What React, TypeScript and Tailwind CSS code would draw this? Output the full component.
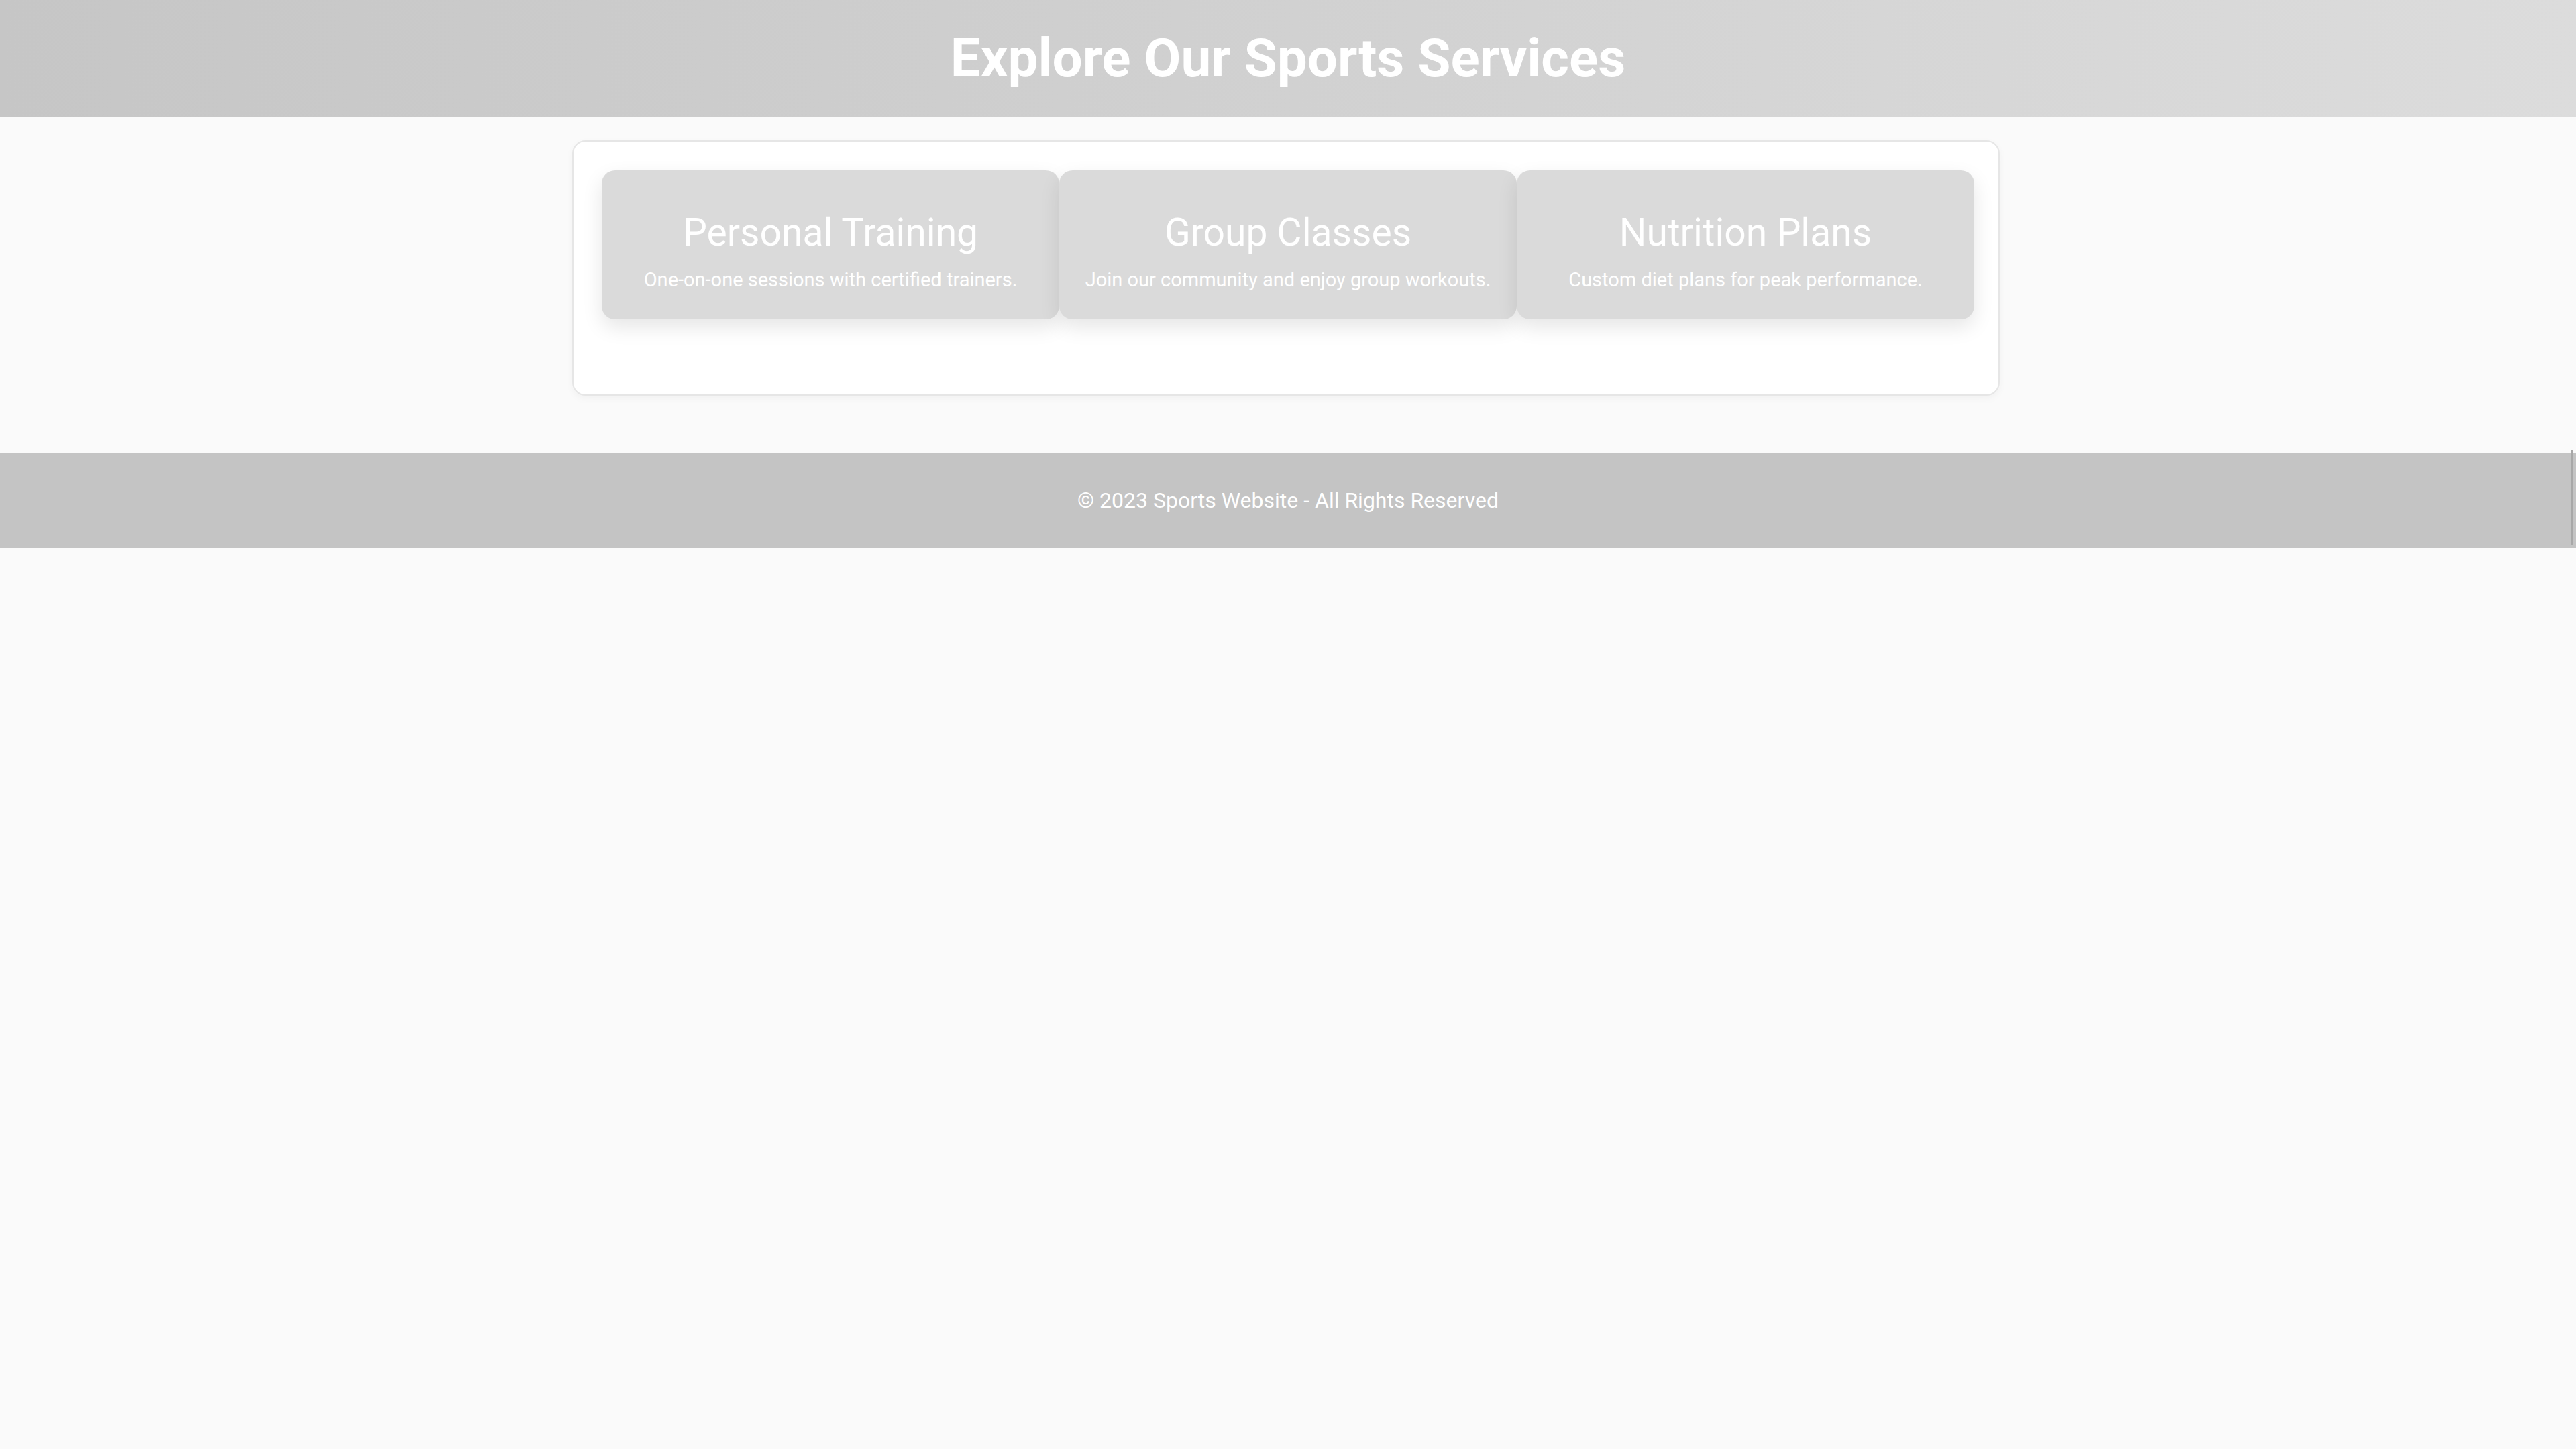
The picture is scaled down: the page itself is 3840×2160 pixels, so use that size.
import React from "react";

interface Service {
  title: string;
  text: string;
}

const services: Service[] = [
  { title: "Personal Training", text: "One-on-one sessions with certified trainers." },
  { title: "Group Classes", text: "Join our community and enjoy group workouts." },
  { title: "Nutrition Plans", text: "Custom diet plans for peak performance." },
];

const ServiceCard: React.FC<Service> = ({ title, text }) => (
  <div className="bg-[#dadada] rounded-[20px] shadow-[0_12px_30px_rgba(0,0,0,0.1)] pt-[58px] pb-[41px] px-[20px] text-center text-white">
    <h3 className="text-[57px] font-normal leading-[70px] mb-[18px]">{title}</h3>
    <p className="text-[29px] leading-[35px]">{text}</p>
  </div>
);

const App: React.FC = () => {
  return (
    <div className="min-h-screen bg-[#fafafa] font-['Roboto',sans-serif]">
      <header className="bg-gradient-to-r from-[#c6c6c6] to-[#dcdcdc] py-[40px] text-center">
        <h1 className="text-[80px] font-bold leading-[94px] text-white">Explore Our Sports Services</h1>
      </header>

      <main className="pt-[35px] pb-[86px]">
        <section className="mx-auto w-[2128px] -translate-x-[3px] bg-white border-2 border-[#e6e6e6] rounded-[20px] shadow-[0_4px_12px_rgba(0,0,0,0.04)] pt-[43px] pb-[112px] pl-[42px] pr-[36px]">
          <div className="grid grid-cols-3">
            {services.map((s) => (
              <ServiceCard key={s.title} {...s} />
            ))}
          </div>
        </section>
      </main>

      <footer className="relative bg-[#c4c4c4] py-[50px] text-center text-white">
        <p className="text-[32px] leading-[41px]">© 2023 Sports Website - All Rights Reserved</p>
        {/* thin divider at right edge */}
        <div className="absolute right-[5px] top-[-5px] h-[142px] w-[2px] bg-[#a8a8a8]" />
      </footer>
    </div>
  );
};

export default App;
